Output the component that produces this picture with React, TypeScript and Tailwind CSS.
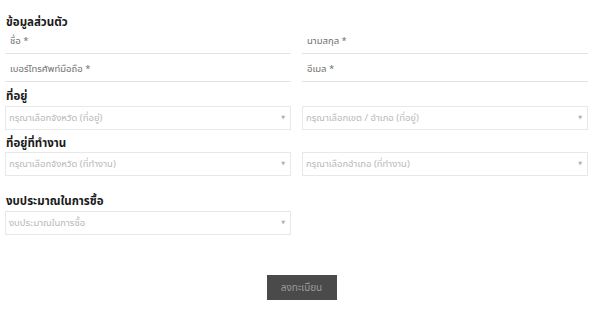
import React from 'react';

const font = { fontFamily: '"Noto Sans", "Noto Sans Thai", "DejaVu Sans", sans-serif' };

const TextField: React.FC<{ label: string }> = ({ label }) => (
  <div className="h-[24px] border-b border-[#e3e3e3] flex items-center pl-[5px] text-[9.5px] text-[#707070]">
    {label}
  </div>
);

const SelectBox: React.FC<{ placeholder: string }> = ({ placeholder }) => (
  <div className="h-[24px] border border-[#e8e8e8] bg-white flex items-center justify-between pl-[3px] pr-[5px] text-[9.5px] text-[#b8b8b8]">
    <span>{placeholder}</span>
    <span className="text-[5px] text-[#b0b0b0]">▼</span>
  </div>
);

const Heading: React.FC<{ children: React.ReactNode; className?: string }> = ({ children, className }) => (
  <h2 className={`h-[16px] flex items-center pl-[1px] text-[11.5px] font-bold text-[#1a1a1a] ${className ?? ''}`}>
    {children}
  </h2>
);

export default function App() {
  return (
    <div className="w-[600px] h-[323px] bg-white overflow-hidden" style={font}>
      <div className="pl-[5px] pr-[12px] pt-[14px]">
        {/* ข้อมูลส่วนตัว */}
        <Heading>ข้อมูลส่วนตัว</Heading>
        <div className="grid grid-cols-2 gap-x-[11px] gap-y-[4px]">
          <TextField label="ชื่อ *" />
          <TextField label="นามสกุล *" />
          <TextField label="เบอร์โทรศัพท์มือถือ *" />
          <TextField label="อีเมล *" />
        </div>

        {/* ที่อยู่ */}
        <Heading className="mt-[6px]">ที่อยู่</Heading>
        <div className="grid grid-cols-2 gap-x-[11px] mt-[2px]">
          <SelectBox placeholder="กรุณาเลือกจังหวัด (ที่อยู่)" />
          <SelectBox placeholder="กรุณาเลือกเขต / อำเภอ (ที่อยู่)" />
        </div>

        {/* ที่อยู่ที่ทำงาน */}
        <Heading className="mt-[5px]">ที่อยู่ที่ทำงาน</Heading>
        <div className="grid grid-cols-2 gap-x-[11px] mt-[1px]">
          <SelectBox placeholder="กรุณาเลือกจังหวัด (ที่ทำงาน)" />
          <SelectBox placeholder="กรุณาเลือกอำเภอ (ที่ทำงาน)" />
        </div>

        {/* งบประมาณ */}
        <Heading className="mt-[17px]">งบประมาณในการซื้อ</Heading>
        <div className="grid grid-cols-2 gap-x-[11px] mt-[2px]">
          <SelectBox placeholder="งบประมาณในการซื้อ" />
        </div>

        <div className="flex justify-center mt-[40px] pl-[10px]">
          <button className="w-[70px] h-[25px] bg-[#4a4a4a] text-[#9b9b9b] text-[10px]">ลงทะเบียน</button>
        </div>
      </div>
    </div>
  );
}
